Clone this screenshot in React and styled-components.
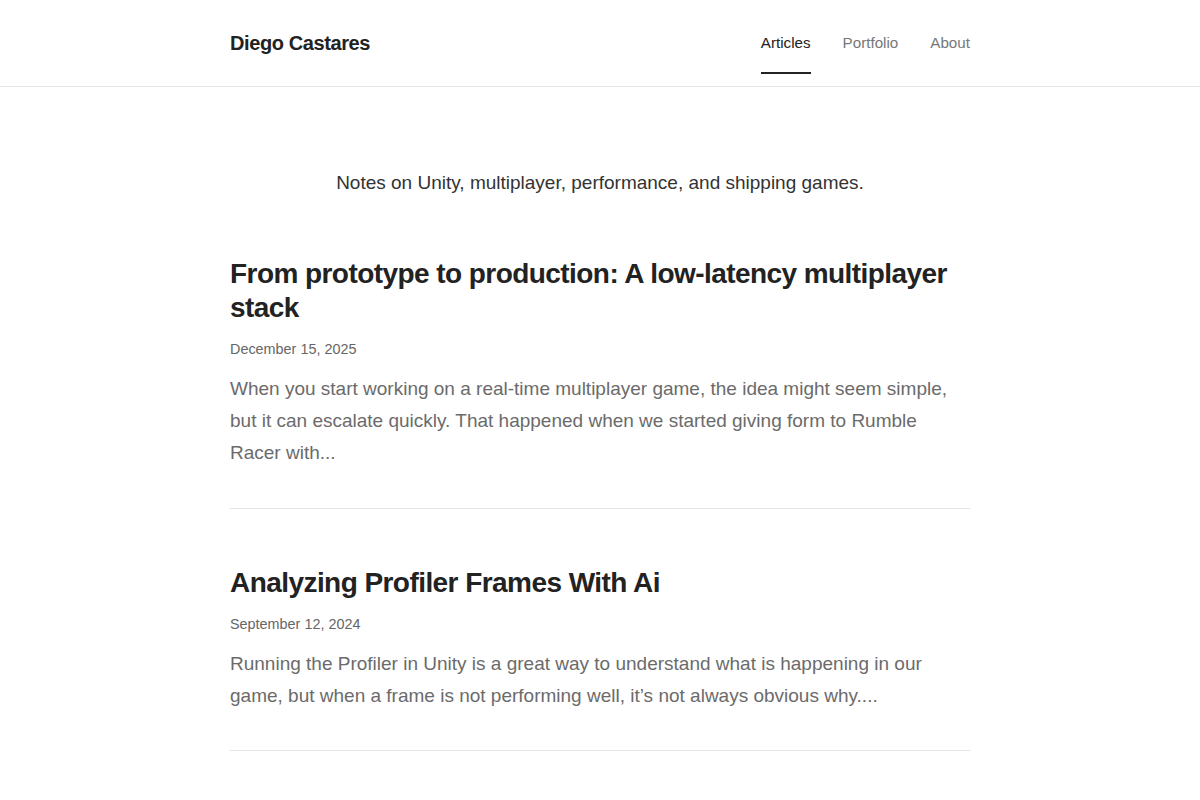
import React from 'react';
import styled, { createGlobalStyle } from 'styled-components';

const GlobalStyle = createGlobalStyle`
  * {
    box-sizing: border-box;
  }

  body {
    margin: 0;
    background: #fff;
    color: #222;
    font-family: 'Liberation Sans', Arial, Helvetica, sans-serif;
  }
`;

const Header = styled.header`
  border-bottom: 1px solid #e5e5e5;
`;

const Bar = styled.div`
  width: 740px;
  margin: 0 auto;
  height: 86px;
  display: flex;
  align-items: center;
  justify-content: space-between;
`;

const Brand = styled.a`
  font-size: 20px;
  font-weight: 700;
  color: #222;
  text-decoration: none;
  letter-spacing: -0.02em;
`;

const Nav = styled.nav`
  display: flex;
  gap: 32px;
  align-self: stretch;
  padding-bottom: 2px;
`;

const NavLink = styled.a`
  position: relative;
  display: flex;
  align-items: center;
  font-size: 15.2px;
  color: ${({ $active }) => ($active ? '#222' : '#777')};
  text-decoration: none;

  &::after {
    content: '';
    display: ${({ $active }) => ($active ? 'block' : 'none')};
    position: absolute;
    left: 0;
    right: 0;
    bottom: 10px;
    height: 2px;
    background: #222;
  }
`;

const Main = styled.main`
  width: 740px;
  margin: 0 auto;
  padding-top: 83px;
`;

const Tagline = styled.p`
  margin: 0 0 61px;
  text-align: center;
  font-size: 19px;
  line-height: 26px;
  color: #333;
`;

const Post = styled.article`
  padding: 0 0 39px;
  border-bottom: 1px solid #e5e5e5;
  & + & {
    padding-top: 57px;
    padding-bottom: 38px;
  }
`;

const Title = styled.h2`
  margin: 0;
  font-size: 28px;
  line-height: 34px;
  font-weight: 700;
  color: #222;
  letter-spacing: -0.02em;
`;

const PostDate = styled.time`
  display: block;
  margin: 14px 0 14px;
  font-size: 14.4px;
  line-height: 20px;
  color: #666;
`;

const Excerpt = styled.p`
  margin: 0;
  font-size: 19px;
  line-height: 32px;
  color: #6b6b6b;
`;

const posts = [
  {
    title: 'From prototype to production: A low-latency multiplayer stack',
    date: 'December 15, 2025',
    excerpt:
      'When you start working on a real-time multiplayer game, the idea might seem simple, but it can escalate quickly. That happened when we started giving form to Rumble Racer with...'
  },
  {
    title: 'Analyzing Profiler Frames With Ai',
    date: 'September 12, 2024',
    excerpt:
      'Running the Profiler in Unity is a great way to understand what is happening in our game, but when a frame is not performing well, it\u2019s not always obvious why....'
  }
];

const App = () => (
  <>
    <GlobalStyle />
    <Header>
      <Bar>
        <Brand href='#'>Diego Castares</Brand>
        <Nav>
          <NavLink href='#' $active>
            Articles
          </NavLink>
          <NavLink href='#'>Portfolio</NavLink>
          <NavLink href='#'>About</NavLink>
        </Nav>
      </Bar>
    </Header>
    <Main>
      <Tagline>Notes on Unity, multiplayer, performance, and shipping games.</Tagline>
      {posts.map((post) => (
        <Post key={post.title}>
          <Title>{post.title}</Title>
          <PostDate>{post.date}</PostDate>
          <Excerpt>{post.excerpt}</Excerpt>
        </Post>
      ))}
    </Main>
  </>
);

export default App;
